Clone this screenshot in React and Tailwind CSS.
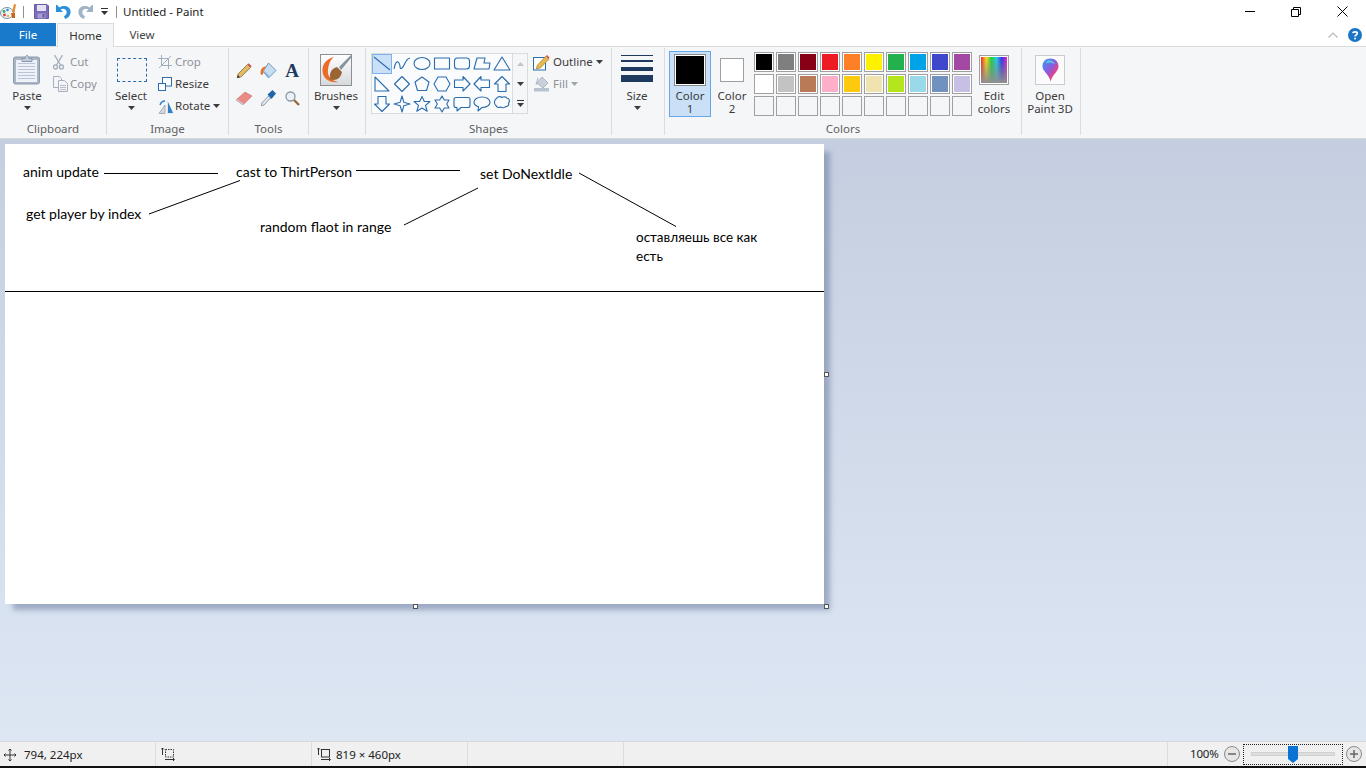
import React from "react";

const Caret = ({ c = "#3c3c3c" }) => (
  <svg width="7" height="4" viewBox="0 0 7 4" className="shrink-0"><path d="M0 0h7L3.5 4z" fill={c} /></svg>
);

const Big = ({ w, icon, lines, caret }) => (
  <div className={`flex flex-col items-center shrink-0 ${w}`}>
    <div className="h-[41px] pt-[6px] flex items-start justify-center">{icon}</div>
    {lines.map((l) => (
      <div key={l} className="h-[13px] leading-[13px] whitespace-nowrap">{l}</div>
    ))}
    {caret && <div className="mt-[4px]"><Caret /></div>}
  </div>
);

const Row = ({ icon, label, caret, disabled }) => (
  <div className={`h-[22px] flex items-center whitespace-nowrap ${disabled ? "text-[#8c9299]" : ""}`}>
    <div className="w-[17px] flex items-center shrink-0">{icon}</div>
    <span>{label}</span>
    {caret && <span className="ml-[3px]"><Caret c={disabled ? "#a0a4a8" : "#3c3c3c"} /></span>}
  </div>
);

const Group = ({ w, label, children, className = "" }) => (
  <section className={`${w} h-[87px] shrink-0 flex flex-col border-r border-[#dadbdc]`}>
    <div className={`h-[74px] flex items-start ${className}`}>{children}</div>
    <div className="h-[13px] leading-[14px] text-center text-[#5f6062]">{label}</div>
  </section>
);

/* ---------- icons ---------- */
const AppIcon = () => (
  <svg width="17" height="18" viewBox="0 0 17 18">
    <ellipse cx="7" cy="11" rx="6.5" ry="5.5" fill="#eef3f8" stroke="#7c93aa" />
    <circle cx="4" cy="9.5" r="1.4" fill="#3aa655" /><circle cx="7.5" cy="8" r="1.3" fill="#2b8fd9" />
    <circle cx="4.5" cy="13" r="1.4" fill="#d8433a" /><circle cx="8" cy="14" r="1.2" fill="#e8b63a" />
    <path d="M12 10l2-8 2 .5-1.5 8.5z" fill="#e58a2e" /><path d="M11 11h4v5h-3z" fill="#c76a1e" />
  </svg>
);
const Save = () => (
  <svg width="15" height="15" viewBox="0 0 15 15">
    <path d="M0.5.5h12.5l1.5 1.500v12.500H.5z" fill="#7a6cb8" stroke="#6a5aa6" />
    <rect x="3" y="1" width="9" height="6" fill="#e3e1f2" /><rect x="3.500" y="9.500" width="8" height="5" fill="#a79dd0" /><rect x="8.500" y="10" width="2" height="3.500" fill="#6a5aa6" />
  </svg>
);
const Undo = ({ c, flip }) => (
  <svg width="15" height="15" viewBox="0 0 15 15" className={flip ? "-scale-x-100" : ""}>
    <path d="M0 1v7h7L4.600 5.600C6.800 4 10 4.800 10.600 7.300c.4 2-.6 4-2.600 5l1 2.700c3.800-1 6-4.500 5.500-8C13.800 2.500 8 .5 3.500 3.600L.8 .8z" fill={c} />
  </svg>
);
const Clipboard = () => (
  <svg width="28" height="31" viewBox="0 0 28 31">
    <rect x=".5" y="3" width="26" height="27" rx="2" fill="#a9b6c6" stroke="#8b9aac" />
    <rect x="3" y="6" width="21" height="22" fill="#eef2f8" />
    <path d="M5 9.500h17M5 12.500h17M5 15.500h17M5 18.500h17M5 21.500h17M5 24.500h17" stroke="#b9c6da" />
    <path d="M9 4.500h3c0-4 4-4 4 0h3v3H9z" fill="#c2ccd9" stroke="#8b9aac" />
  </svg>
);
const Cut = () => (
  <svg width="11" height="15" viewBox="0 0 11 15" fill="none" stroke="#a6b0bc" strokeWidth="1.400">
    <path d="M1.500 0l6 10M9.500 0l-6 10" /><circle cx="2.500" cy="12" r="2" /><circle cx="8.500" cy="12" r="2" />
  </svg>
);
const Copy = () => (
  <svg width="15" height="16" viewBox="0 0 15 16" fill="#f3f5f8" stroke="#a6b0bc">
    <path d="M.5.5h6l2 2v9h-8z" /><path d="M5.500 4.500h6l3 3v8h-9z" /><path d="M7 9.500h6M7 11.500h6M7 13.500h6" strokeWidth=".8" />
  </svg>
);
const SelectIcon = () => <div className="mt-[4px] ml-[2px] w-[30px] h-[24px] border border-dashed border-[#2a6cad]" />;
const Crop = () => (
  <svg width="14" height="14" viewBox="0 0 14 14" fill="none" stroke="#a3aebd">
    <path d="M0 3.500h10.500V14M3.500 0v10.500H14M13 1L1 13" />
  </svg>
);
const Resize = () => (
  <svg width="14" height="14" viewBox="0 0 14 14" fill="#fff" stroke="#2a6cad">
    <rect x="4.500" y=".5" width="9" height="8.500" /><rect x=".5" y="6.500" width="7" height="7" />
  </svg>
);
const Rotate = () => (
  <svg width="17" height="15" viewBox="0 0 17 15">
    <path d="M1 14.500L7 6v8.500z" fill="#d6d9dd" stroke="#a9adb3" /><path d="M9 1l7 13.500H9z" fill="#dfe3e8" />
    <path d="M10 3l5 11h-5z" fill="#2f7fc9" /><path d="M2 6c1-3 3-4 5-4" stroke="#2f7fc9" fill="none" strokeWidth="1.500" />
  </svg>
);
const Pencil = () => (
  <svg width="15" height="15" viewBox="0 0 15 15">
    <path d="M0 15l1.200-4.200L10.500 1.500l3 3L4.200 13.800z" fill="#e4bb62" stroke="#6f6236" strokeWidth=".7" />
    <path d="M10.500 1.500l1.200-1.200 3 3-1.200 1.200z" fill="#d9534f" /><path d="M0 15l.8-3 2.200 2.200z" fill="#333" />
  </svg>
);
const Fill = () => (
  <svg width="17" height="17" viewBox="0 0 17 17">
    <path d="M8.500 1l7.500 7.500-7.500 7.500L3 9.500z" fill="#c6def2" stroke="#6d97bd" />
    <path d="M5 9.500l4.500 4.500-1 2-5.500-6.500z" fill="#8fb6d8" /><path d="M.5 11c0-4 2-6.500 6-6.500L3.500 8 3 12c-.7 1.500-2.500 1-2.500-1z" fill="#ea6f25" />
  </svg>
);
const Eraser = () => (
  <svg width="16" height="13" viewBox="0 0 16 13">
    <path d="M0 8l9-8 7 4-9 9z" fill="#e98a85" stroke="#c7716c" strokeWidth=".6" /><path d="M0 8l7 5 1-1-7-5z" fill="#c7cdd4" />
  </svg>
);
const Dropper = () => (
  <svg width="15" height="16" viewBox="0 0 15 16">
    <path d="M0 16l.8-3L7.500 6l2 2L3 15z" fill="#dfe6ee" stroke="#7a8896" strokeWidth=".8" />
    <path d="M6.500 4.500l5-4.500 3.500 3.500-4.500 5.500z" fill="#1f66ad" />
  </svg>
);
const Magnifier = () => (
  <svg width="15" height="15" viewBox="0 0 15 15" fill="none">
    <circle cx="5.500" cy="5.500" r="4.500" fill="#eaf1f7" stroke="#8a97a5" strokeWidth="1.300" /><path d="M9 9l5 5" stroke="#9a6b3a" strokeWidth="2.400" />
  </svg>
);
const Brushes = () => (
  <svg width="32" height="32" viewBox="0 0 32 32">
    <defs><linearGradient id="bg1" x1="0" y1="0" x2="0" y2="1"><stop offset="0" stopColor="#fff" /><stop offset="1" stopColor="#d6d9dc" /></linearGradient></defs>
    <rect x=".5" y=".5" width="31" height="31" fill="url(#bg1)" stroke="#8f8f8f" />
    <path d="M14 3C5 5 1 12 3 20c2 6 8 9 15 8-7-2-11-6-10-12 .5-5 2-10 6-13z" fill="#ea6a28" />
    <path d="M10 22c0-5 3-8 7-9l5 5c-1 5-4 8-9 8l-4-1c2-1 1-2 1-3z" fill="#9a6434" />
    <path d="M19 13l2 3 10-12V1z" fill="#8795a3" />
  </svg>
);
const Outline = () => (
  <svg width="17" height="17" viewBox="0 0 17 17">
    <rect x=".5" y="3.500" width="12" height="12.500" fill="#fff" stroke="#2a6cad" />
    <path d="M3 15l1.500-4L13 2l3 3-8.500 9z" fill="#e9b84c" stroke="#8f7a3c" strokeWidth=".6" /><path d="M13 2l1-1 2.500 2.500-1 1.500z" fill="#d9534f" />
  </svg>
);
const FillShape = () => (
  <svg width="17" height="16" viewBox="0 0 17 16">
    <path d="M9 1l6 6-5 5-6-5z" fill="#c9d2dc" stroke="#a9b5c2" /><path d="M1 12h15v3.500H1z" fill="#b9c3cf" /><path d="M5 2L3 9" stroke="#a9b5c2" />
  </svg>
);
const HelpDot = () => (
  <svg width="14" height="14" viewBox="0 0 14 14">
    <circle cx="7" cy="7" r="7" fill="#1a75c6" />
    <path d="M4.700 5.200C5 3.500 9.300 3.300 9.300 5.500 9.300 7 7 7 7 8.600" stroke="#fff" strokeWidth="1.600" fill="none" /><rect x="6.200" y="9.700" width="1.700" height="1.700" fill="#fff" />
  </svg>
);

const S = { fill: "none", stroke: "#2a6cad", strokeWidth: 1.100, strokeLinejoin: "round" };
const shapes = [
  <path d="M2 3l16 13" />,
  <path d="M2 15c1-6 3-9 5-6s0 7 3 5 3-9 8-10" />,
  <ellipse cx="10" cy="9.500" rx="8" ry="6" />,
  <rect x="2.500" y="4" width="15" height="11" />,
  <rect x="2.500" y="4" width="15" height="11" rx="3" />,
  <path d="M2 15L5 4h8l-1 5h6l-1 6z" />,
  <path d="M10 3l8 13H2z" />,
  <path d="M3 3l14 14H3z" />,
  <path d="M10 2.500L17.500 10 10 17.500 2.500 10z" />,
  <path d="M10 3l7 5-2.500 8.500h-9L3 8z" />,
  <path d="M6 3h8l4 7-4 7H6l-4-7z" />,
  <path d="M2.500 6H11V2.500l7 7.500-7 7V13.500H2.500z" />,
  <path d="M17.500 6H9V2.500L2 10l7 7V13.500h8.500z" />,
  <path d="M6 17.500V10H2.500L10 2.500 17.500 10H14v7.500z" />,
  <path d="M6 2.500V10H2.500L10 17.500 17.500 10H14V2.500z" />,
  <path d="M10 2l1.800 6.200L18 10l-6.200 1.800L10 18l-1.800-6.200L2 10l6.200-1.800z" />,
  <path d="M10 2.500l2.300 5H18l-4.500 3.800 1.700 6L10 14l-5.200 3.300 1.700-6L2 7.500h5.700z" />,
  <path d="M10 2l2.300 4H17l-2.300 4L17 14h-4.700L10 18l-2.300-4H3l2.300-4L3 6h4.700z" />,
  <path d="M4 3.500h12c1.200 0 2 .8 2 2v6c0 1.200-.8 2-2 2H9l-4 3.500V13.500H4c-1.200 0-2-.8-2-2v-6c0-1.200.8-2 2-2z" />,
  <path d="M10 3c4.500 0 8 2.300 8 5.300s-3.500 5.200-8 5.200l-4 3.500.5-4.200C3.800 12 2 10.300 2 8.300 2 5.300 5.500 3 10 3z" />,
  <path d="M5 4c1-2 4-1.500 5-.5 1.500-1 4-1 5 .8 2-.2 3.500 3 1.500 4.700 1 2-1 4-3 3.500-1 1.500-3.500 1.500-5 .5-2 1-4 .2-4.500-1.500C2 10 1.500 6 5 4z" />,
];

const Shape = ({ d, active }) => (
  <div className={`w-[20px] h-[20px] ${active ? "bg-[#c9e0f7] outline outline-1 -outline-offset-1 outline-[#7db3ea]" : ""}`}>
    <svg width="20" height="20" viewBox="0 0 20 20" {...S}>{d}</svg>
  </div>
);

const row1 = ["bg-[#000000]", "bg-[#7f7f7f]", "bg-[#880015]", "bg-[#ed1c24]", "bg-[#ff7f27]", "bg-[#fff200]", "bg-[#22b14c]", "bg-[#00a2e8]", "bg-[#3f48cc]", "bg-[#a349a4]"];
const row2 = ["bg-[#ffffff]", "bg-[#c3c3c3]", "bg-[#b97a57]", "bg-[#ffaec9]", "bg-[#ffc90e]", "bg-[#efe4b0]", "bg-[#b5e61d]", "bg-[#99d9ea]", "bg-[#7092be]", "bg-[#c8bfe7]"];

const Swatch = ({ c }) => (
  <div className={`w-[20px] h-[20px] border border-[#a0a0a0] p-[1px] ${c ? "bg-white" : "bg-[#f5f6f7]"}`}>
    <div className={`w-full h-full ${c || ""}`} />
  </div>
);

const Rainbow = () => (
  <svg className="mt-[1px]" width="30" height="30" viewBox="0 0 30 30">
    <defs>
      <linearGradient id="rb" x1="0" y1="0" x2="1" y2="0">
        <stop offset="0" stopColor="#ff2020" /><stop offset=".2" stopColor="#ffe020" /><stop offset=".4" stopColor="#20d040" /><stop offset=".6" stopColor="#20d0e0" /><stop offset=".8" stopColor="#3030f0" /><stop offset="1" stopColor="#f020c0" />
      </linearGradient>
      <linearGradient id="rv" x1="0" y1="0" x2="0" y2="1">
        <stop offset="0" stopColor="#808080" stopOpacity="0" /><stop offset="1" stopColor="#909090" stopOpacity="1" />
      </linearGradient>
    </defs>
    <rect x=".5" y=".5" width="29" height="29" fill="#fff" stroke="#a0a0a0" />
    <rect x="2" y="2" width="26" height="26" fill="url(#rb)" /><rect x="2" y="2" width="26" height="26" fill="url(#rv)" />
  </svg>
);

const Paint3D = () => (
  <svg className="mt-[1px]" width="30" height="30" viewBox="0 0 30 30">
    <defs>
      <linearGradient id="p3" x1="0" y1="0" x2="1" y2="1">
        <stop offset="0" stopColor="#2f9cf0" /><stop offset=".45" stopColor="#8a5ae0" /><stop offset=".75" stopColor="#f0407a" /><stop offset="1" stopColor="#f5a020" />
      </linearGradient>
    </defs>
    <rect x=".5" y=".5" width="29" height="29" fill="#fbfbfc" stroke="#c9cbce" />
    <path d="M15 3.500c5.500 0 8.500 3.500 8.500 8 0 5-5.500 7-8 15-1-7-8-10-8-15 0-4.500 3-8 7.500-8z" fill="url(#p3)" />
    <path d="M12 5.500c3-1 7 0 8 4-3-2-6-2-9-1z" fill="#4fd4e8" opacity=".8" />
  </svg>
);

const Handle = ({ className }) => (
  <div className={`absolute w-[5px] h-[5px] bg-white border border-[#555555] ${className}`} />
);

const Note = ({ className, children }) => (
  <div className={`absolute text-[#000] leading-[19px] ${className}`}>{children}</div>
);

export default function App() {
  return (
    <div className="w-[1366px] h-[768px] overflow-hidden flex flex-col bg-white text-[#3b3b3b] text-[11.500px] font-['Noto_Sans','Open_Sans',sans-serif]">
      {/* title bar */}
      <header className="h-[23px] flex items-center shrink-0 relative">
        <div className="w-[23px] shrink-0 pb-[2px]"><AppIcon /></div>
        <div className="w-px h-[12px] bg-[#8f8f8f]" />
        <div className="ml-[10px]"><Save /></div>
        <div className="ml-[7px]"><Undo c="#2b8fd9" /></div>
        <div className="ml-[7px]"><Undo c="#9fb4c7" flip /></div>
        <div className="ml-[7px] flex flex-col items-center gap-[2px] w-[9px]">
          <div className="w-[7px] h-px bg-[#333]" />
          <Caret c="#333" />
        </div>
        <div className="ml-[7px] w-px h-[12px] bg-[#8f8f8f]" />
        <div className="ml-[6px] text-[#222] text-[11.500px] whitespace-nowrap">Untitled - Paint</div>
        <div className="ml-auto flex items-center">
          <div className="w-[46px] pr-[3px] flex justify-center"><div className="w-[10px] h-px bg-[#000]" /></div>
          <div className="w-[46px] pr-[3px] flex justify-center">
            <svg width="10" height="10" viewBox="0 0 10 10" fill="none" stroke="#000"><path d="M.5 2.500h7v7h-7zM2.500 2.500v-2h7v7h-2" /></svg>
          </div>
          <div className="w-[46px] pr-[1px] flex justify-center">
            <svg width="11" height="11" viewBox="0 0 11 11" stroke="#000"><path d="M.5.5l10 10M10.500.5l-10 10" /></svg>
          </div>
        </div>
      </header>

      {/* tabs */}
      <nav className="h-[24px] shrink-0 flex border-b border-[#dadbdc] relative">
        <div className="w-[56px] h-[23px] bg-[#1979ca] text-white flex items-center justify-center">File</div>
        <div className="ml-[1px] w-[57px] h-[24px] bg-[#f5f6f7] border border-b-0 border-[#dadbdc] flex items-center justify-center text-[#333]">Home</div>
        <div className="w-[56px] flex items-center justify-center text-[#444]">View</div>
        <div className="ml-auto flex items-center pr-[4px] gap-[10px]">
          <svg width="10" height="6" viewBox="0 0 10 6" fill="none" stroke="#b5b8bc" strokeWidth="1.200"><path d="M.5 5.500L5 1l4.500 4.500" /></svg>
          <HelpDot />
        </div>
      </nav>

      {/* ribbon */}
      <div className="h-[92px] shrink-0 bg-[#f5f6f7] border-b border-[#d9dadb] pt-[1px] flex">
        <Group w="w-[107px]" label="Clipboard" className="pl-[10px]">
          <Big w="w-[34px]" icon={<Clipboard />} lines={["Paste"]} caret />
          <div className="ml-[9px] pt-[3px] text-[#8c9299]">
            <Row icon={<Cut />} label="Cut" />
            <Row icon={<Copy />} label="Copy" />
          </div>
        </Group>
        <Group w="w-[122px]" label="Image" className="pl-[7px]">
          <Big w="w-[34px]" icon={<SelectIcon />} lines={["Select"]} caret />
          <div className="ml-[10px] pt-[3px]">
            <Row icon={<Crop />} label="Crop" disabled />
            <Row icon={<Resize />} label="Resize" />
            <Row icon={<Rotate />} label="Rotate" caret />
          </div>
        </Group>
        <Group w="w-[80px]" label="Tools" className="pl-[3px] pt-[8px]">
          <div className="grid grid-cols-[24px_24px_24px] grid-rows-[28px_28px] place-items-center">
            <Pencil />
            <Fill />
            <span className="font-['Liberation_Serif',serif] font-bold text-[19px] leading-none text-[#1f3a5f]">A</span>
            <Eraser />
            <Dropper />
            <Magnifier />
          </div>
        </Group>
        <Group w="w-[57px]" label="" className="justify-center pr-[2px]">
          <Big w="w-[50px]" icon={<Brushes />} lines={["Brushes"]} caret />
        </Group>
        <Group w="w-[246px]" label="Shapes" className="pl-[5px] pt-[5px]">
          <div className="w-[157px] h-[61px] border border-[#dadbdc] bg-[#fafbfc] flex">
            <div className="w-[140px] flex flex-wrap content-start">
              {shapes.map((d, i) => <Shape key={i} d={d} active={i === 0} />)}
            </div>
            <div className="ml-auto w-[15px] bg-[#f5f6f7] border-l border-[#dadbdc] flex flex-col items-center">
              <div className="h-[20px] flex items-center"><svg width="7" height="4" viewBox="0 0 7 4"><path d="M0 4h7L3.500 0z" fill="#c2c5c9" /></svg></div>
              <div className="h-[20px] flex items-center"><Caret /></div>
              <div className="h-[20px] flex flex-col justify-center items-center gap-[2px]"><div className="w-[7px] h-px bg-[#333]" /><Caret /></div>
            </div>
          </div>
          <div className="ml-[5px] pt-[3px] -mt-[5px]">
            <Row icon={<Outline />} label={<span className="ml-[3px]">Outline</span>} caret />
            <Row icon={<FillShape />} label={<span className="ml-[3px]">Fill</span>} caret disabled />
          </div>
        </Group>
        <Group w="w-[53px]" label="" className="pl-[9px]">
          <div className="flex flex-col items-center w-[32px]">
            <div className="h-[41px] w-full pt-[7px] flex flex-col">
              <div className="h-px bg-[#1f3a5f]" />
              <div className="mt-[4px] h-[2px] bg-[#1f3a5f]" />
              <div className="mt-[5px] h-[4px] bg-[#1f3a5f]" />
              <div className="mt-[4px] h-[7px] bg-[#1f3a5f]" />
            </div>
            <div className="h-[13px] leading-[13px]">Size</div>
            <div className="mt-[4px]"><Caret /></div>
          </div>
        </Group>
        <Group w="w-[357px]" label="Colors" className="pl-[4px]">
          <div className="mt-[3px] w-[42px] h-[66px] bg-[#c9e0f7] border border-[#66a7e8] flex flex-col items-center shrink-0">
            <div className="mt-[2px] w-[32px] h-[32px] bg-[#000] border border-[#888] outline outline-1 outline-white -outline-offset-2" />
            <div className="mt-[3px] h-[13px] leading-[13px]">Color</div>
            <div className="h-[13px] leading-[13px]">1</div>
          </div>
          <div className="w-[42px] shrink-0 flex flex-col items-center">
            <div className="h-[41px] pt-[10px]">
              <div className="w-[24px] h-[24px] bg-white border border-[#a0a0a0]" />
            </div>
            <div className="h-[13px] leading-[13px]">Color</div>
            <div className="h-[13px] leading-[13px]">2</div>
          </div>
          <div className="ml-[1px] mt-[4px] grid grid-cols-[repeat(10,20px)] gap-[2px] shrink-0">
            {row1.map((c) => <Swatch key={c} c={c} />)}
            {row2.map((c) => <Swatch key={c} c={c} />)}
            {row1.map((c) => <Swatch key={c} />)}
          </div>
          <div className="ml-[2px]">
            <Big w="w-[40px]" icon={<Rainbow />} lines={["Edit", "colors"]} />
          </div>
        </Group>
        <Group w="w-[59px]" label="" className="justify-center pr-[2px]">
          <Big w="w-[56px]" icon={<Paint3D />} lines={["Open", "Paint 3D"]} />
        </Group>
      </div>

      {/* workspace */}
      <main className="flex-1 min-h-0 pl-[5px] pt-[5px] bg-[linear-gradient(180deg,#c4cee0,#dde7f4)]">
        <div className="relative w-[819px] h-[460px] bg-white shadow-[7px_7px_5px_-1px_rgba(110,125,160,0.55)] text-[14px] font-['Lato','Open_Sans',sans-serif]">
          <svg className="absolute left-0 top-0" width="819" height="460" viewBox="0 0 819 460" stroke="#000" fill="none">
            <path d="M99 29.500h114M351 26.500h104M144 70l91-33.500M399 81l74-37M574 29l97 53.500M0 147.500h819" />
          </svg>
          <Note className="left-[18px] top-[18px]">anim update</Note>
          <Note className="left-[231px] top-[18px]">cast to ThirtPerson</Note>
          <Note className="left-[21px] top-[60px]">get player by index</Note>
          <Note className="left-[255px] top-[73px]">random flaot in range</Note>
          <Note className="left-[475px] top-[20px]">set DoNextIdle</Note>
          <Note className="left-[631px] top-[84px] w-[135px] text-[13.500px]">оставляешь все как есть</Note>
          <Handle className="left-[819px] top-[228px]" />
          <Handle className="left-[408px] top-[460px]" />
          <Handle className="left-[819px] top-[460px]" />
        </div>
      </main>

      {/* status bar */}
      <footer className="h-[25px] shrink-0 bg-[#f0f0f0] border-t border-[#d9d9d9] flex text-[#222] text-[11.500px]">
        <div className="w-[156px] pt-[1px] border-r border-[#dcdcdc] flex items-center pl-[4px] gap-[8px]">
          <svg width="12" height="12" viewBox="0 0 12 12" fill="none" stroke="#333"><path d="M6 0v12M0 6h12M4.500 1.500L6 0l1.500 1.500M4.500 10.500L6 12l1.500-1.500M1.500 4.500L0 6l1.500 1.500M10.500 4.500L12 6l-1.500 1.500" /></svg>
          <span>794, 224px</span>
        </div>
        <div className="w-[156px] border-r border-[#dcdcdc] flex items-center pl-[5px]">
          <svg width="14" height="13" viewBox="0 0 14 13" fill="none" stroke="#333"><path d="M1.500 0v7M0 1.500L1.500 0 3 1.500" /><rect x="4.500" y="1.500" width="8" height="7.500" strokeDasharray="1.500 1" /><path d="M4 11.500h9M12 10l1.500 1.500L12 13" /></svg>
        </div>
        <div className="w-[156px] pt-[1px] border-r border-[#dcdcdc] flex items-center pl-[5px] gap-[5px]">
          <svg width="14" height="13" viewBox="0 0 14 13" fill="none" stroke="#333"><path d="M1.500 0v7M0 1.500L1.500 0 3 1.500" /><rect x="4.500" y="1.500" width="8" height="7.500" /><path d="M4 11.500h9M12 10l1.500 1.500L12 13" /></svg>
          <span>819 × 460px</span>
        </div>
        <div className="w-[156px] border-r border-[#dcdcdc]" />
        <div className="w-[544px] border-r border-[#dcdcdc]" />
        <div className="flex-1 flex items-center">
          <span className="ml-[22px] w-[34px] whitespace-nowrap tracking-[-0.2px]">100%</span>
          <svg width="16" height="16" viewBox="0 0 16 16" fill="#e6e6e6" stroke="#8a8a8a"><circle cx="8" cy="8" r="7.500" /><path d="M4 8h8" stroke="#666" strokeWidth="1.500" /></svg>
          <div className="ml-[3px] w-[100px] h-[21px] border border-dotted border-[#222] relative flex items-center justify-center">
            <div className="w-[84px] h-[4px] bg-[#dedede] border border-[#d0d0d0]" />
            <svg className="absolute left-[44px] top-[1px]" width="10" height="18" viewBox="0 0 10 18"><path d="M0 0h10v13l-5 4-5-4z" fill="#0a74d6" /></svg>
          </div>
          <svg className="ml-[3px]" width="16" height="16" viewBox="0 0 16 16" fill="#e6e6e6" stroke="#8a8a8a"><circle cx="8" cy="8" r="7.500" /><path d="M4 8h8M8 4v8" stroke="#666" strokeWidth="1.500" /></svg>
        </div>
      </footer>
      <div className="h-[2px] shrink-0 bg-[#111]" />
    </div>
  );
}
